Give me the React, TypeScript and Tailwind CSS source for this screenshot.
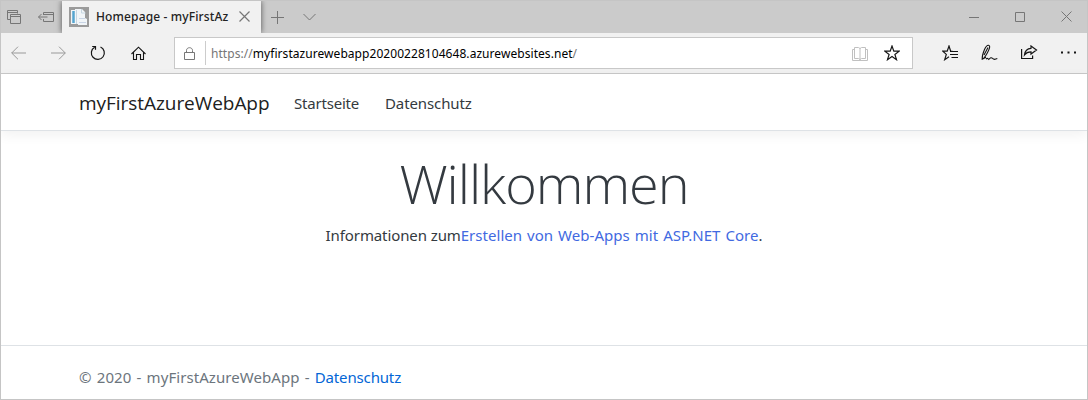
import type { ReactNode } from "react";

function Icon({ w, h, className = "", children }: { w: number; h: number; className?: string; children: ReactNode }) {
  return (
    <svg width={w} height={h} viewBox={`0 0 ${w} ${h}`} fill="none" stroke="currentColor" className={`block shrink-0 ${className}`}>
      {children}
    </svg>
  );
}

function TabStrip() {
  return (
    <div className="flex h-8 overflow-hidden bg-[#cbcbcb] text-[#767676]">
      <Icon w={14} h={14} className="mt-[9px] ml-[6px]">
        <path d="M3.5 9.5h-3v-9h10v3M.5 2.5h10M3.5 4.5h10v9h-10zM3.5 6.5h10" />
      </Icon>
      <Icon w={16} h={12} className="mt-[10px] ml-[17px]">
        <path d="M5.5 4v-2.500h10v9h-10v-2.500M5.500 3.500h10M.5 6h9M3.500 3l-3 3 3 3" />
      </Icon>
      <div className="ml-2 flex w-[199px] bg-[#f1f1f1] shadow-[0_0_6px_rgba(0,0,0,0.6)]">
        <Icon w={20} h={20} className="mt-[6px] ml-[7px]">
          <rect width="20" height="20" fill="#9b9b9b" stroke="none" />
          <path d="M2 3h4V2h7l3 3v6l2 1v6H9v-1H2z" fill="#f1f5f8" stroke="none" />
          <path d="M4.500 4v12" stroke="#55a5d0" strokeWidth="2.500" />
          <path d="M7.500 3v14M12.500 2v4h4" stroke="#c6d6e1" />
          <path d="M10 11.500h6M10 15.500h7" stroke="#c9d5e6" />
        </Icon>
        <div className="mt-[6px] ml-[7px] w-[135px] overflow-hidden font-['Noto_Sans'] text-[12px] leading-[20px] font-medium tracking-[0.13px] whitespace-nowrap text-[#222]">Homepage - myFirstAz</div>
        <Icon w={11} h={11} className="mt-[10px] ml-[8px]">
          <path d="M.5.5l10 10m0-10l-10 10" strokeWidth="1.2" />
        </Icon>
      </div>
      <Icon w={13} h={13} className="mt-[10px] ml-[10px]"><path d="M6.5 0v13M0 6.5h13" /></Icon>
      <Icon w={13} h={8} className="mt-[12px] ml-[19px]"><path d="M.5 1l6 6 6-6" /></Icon>
      <div className="ml-auto flex">
        <Icon w={10} h={11} className="mt-[11px]"><path d="M0 5.5h10" /></Icon>
        <Icon w={10} h={10} className="mt-[11px] ml-[36px]"><path d="M.5.5h9v9h-9z" /></Icon>
        <Icon w={11} h={11} className="mt-[10px] mr-[15px] ml-[36px]"><path d="M.5.5l10 10m0-10l-10 10" /></Icon>
      </div>
    </div>
  );
}

function Toolbar() {
  return (
    <div className="flex h-[41px] border-b border-[#c8c8c8] bg-[#f1f1f1] text-[#151515]">
      <Icon w={15} h={14} className="mt-[13px] ml-[10px] text-[#999]"><path d="M15 7H.7M7 .7L.7 7 7 13.3" /></Icon>
      <Icon w={15} h={14} className="mt-[13px] ml-[25px] text-[#999]"><path d="M0 7h14.3M8 .7L14.3 7 8 13.3" /></Icon>
      <Icon w={16} h={16} className="mt-[12px] ml-[24px]"><path d="M4.6 2.3a6.5 6.5 0 1 0 5.9-.3M2.2 1.5h3.3v3.3" strokeWidth="1.2" /></Icon>
      <Icon w={15} h={15} className="mt-[13px] ml-[25px]"><path d="M.5 8l7-6.8 7 6.8M2.5 6.5v7h3v-5h4v5h3v-7" strokeWidth="1.1" /></Icon>
      <div className="mt-1 ml-[28px] flex h-8 w-[739px] border border-[#c8c8c8] bg-white">
        <Icon w={11} h={13} className="mt-[9px] ml-[9px] text-[#777]"><path d="M.5 5.5h10v7H.5zM2.5 5.5V3.4C2.5-.2 8.5-.2 8.5 3.4v2.1" /></Icon>
        <div className="mt-[3px] ml-[10px] h-6 w-px bg-[#ccc]" />
        <div className="mt-[6px] ml-[5px] font-['Noto_Sans'] text-[12px] leading-5 tracking-[0.055px] whitespace-nowrap text-black"><span className="text-[#767676]">https://</span>myfirstazurewebapp20200228104648.azurewebsites.net<span className="text-[#767676]">/</span></div>
        <Icon w={16} h={14} className="mt-[9px] ml-auto text-[#c0c0c0]"><path d="M2.5.5h4l1.5 1 1.5-1h4v11h-4l-1.5 1-1.5-1h-4zM8 1v12M2 2.5H.5v11h15v-11H14" /></Icon>
        <Icon w={16} h={16} className="mt-[7px] mr-[12px] ml-[16px]"><path d="M8 1l1.8 5.1 5.4.1-4.3 3.2 1.6 5.3L8 11.5l-4.5 3.2 1.6-5.3L.8 6.2l5.4-.1z" strokeWidth="1.2" /></Icon>
      </div>
      <Icon w={16} h={16} className="mt-[12px] ml-[29px]"><path d="M10.5 6.4L8.6 6 7 1 5.2 6.1.8 6.2l3.5 3.2-1.6 5.3L7 11.8M8 6.5h8M8 9.5h8M9.5 12.5H16" strokeWidth="1.2" /></Icon>
      <Icon w={17} h={17} className="mt-[11px] ml-[23px]"><path d="M1.200 15.200C1 12 2.200 8.500 3.500 5.500 4.800 2.500 6 1 7.500 1.200c2.300.3.800 4.400-1.200 7.800C4.500 12.200 2.800 14.800 1.200 15.200zM3 11L7 3.500M1.200 15.200L5 13.200M5 15c1.500-1.200 2.200-.4 2.800.4 1-.8 2.200-2.700 3.700-1 1.200 1.300 2.500 1.300 4.800.2" strokeWidth="1.100" /></Icon>
      <Icon w={17} h={15} className="mt-[12px] ml-[23px]"><path d="M.6 4v9.5h11v-3M10 1l5.5 4-5.5 4V6.8c-3.3 0-5 1-6.5 3C4 5.6 6.2 3.5 10 3.3z" strokeWidth="1.2" /></Icon>
      <Icon w={15} h={3} className="mt-[18px] ml-[23px]"><path d="M0 1.5h2m4.5 0h2m4.5 0h2" strokeWidth="2" /></Icon>
    </div>
  );
}

export default function App() {
  return (
    <div className="flex h-[400px] w-[1088px] flex-col overflow-hidden border border-[#c5c5c5] bg-white font-['Noto_Sans'] text-[#343a40]">
      <TabStrip />
      <Toolbar />
      <header className="flex h-[57px] shrink-0 border-b border-[#dee2e6] pl-[78px] whitespace-nowrap shadow-[0_4px_12px_rgba(0,0,0,0.06)]">
        <a className="mt-[14px] w-[215px] font-['Open_Sans'] text-[19px] leading-[30px] tracking-[-0.05px] text-[#202020]">myFirstAzureWebApp</a>
        <a className="mt-[17px] w-[91px] text-[15px] leading-6 tracking-[-0.2px]">Startseite</a>
        <a className="mt-[17px] text-[15px] leading-6 tracking-[-0.1px]">Datenschutz</a>
      </header>
      <main className="flex h-[214px] shrink-0 flex-col items-center whitespace-nowrap">
        <h1 className="mt-[18px] font-['Open_Sans'] text-[54px] leading-[68px] font-light tracking-[-1.05px]">Willkommen</h1>
        <p className="mt-[6px] text-[15px] leading-6 tracking-[-0.1px]">Informationen zum<a className="tracking-[0.04px] text-[#4169e1] [word-spacing:1px]">Erstellen von Web-Apps mit ASP.NET Core</a>.</p>
      </main>
      <footer className="flex h-[54px] shrink-0 border-t border-[#dee2e6] pl-[78px] text-[15px] leading-6 tracking-[0.06px] whitespace-nowrap text-[#6c757d] [word-spacing:1.25px]">
        <p className="mt-[19px]">© 2020 - myFirstAzureWebApp - <a className="tracking-[-0.15px] text-[#0366d6]">Datenschutz</a></p>
      </footer>
    </div>
  );
}
